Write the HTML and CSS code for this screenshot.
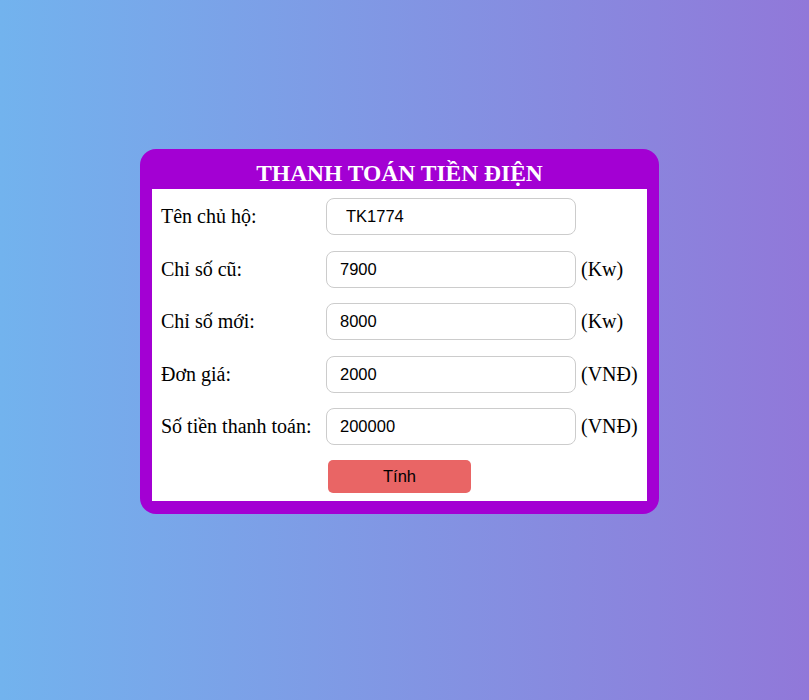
FILE: index.html
```html
<!DOCTYPE html>
<html>
<head>
<meta charset="utf-8">
<link rel="stylesheet" href="styles.css">
</head>
<body>
<div class="page">
  <form class="card">
    <h1 class="title">THANH TOÁN TIỀN ĐIỆN</h1>
    <div class="panel">
      <div class="row">
        <label class="label">Tên chủ hộ:</label>
        <input class="field field-name" value="TK1774">
        <span class="unit"></span>
      </div>
      <div class="row">
        <label class="label">Chỉ số cũ:</label>
        <input class="field" value="7900">
        <span class="unit">(Kw)</span>
      </div>
      <div class="row">
        <label class="label">Chỉ số mới:</label>
        <input class="field" value="8000">
        <span class="unit">(Kw)</span>
      </div>
      <div class="row">
        <label class="label">Đơn giá:</label>
        <input class="field" value="2000">
        <span class="unit">(VNĐ)</span>
      </div>
      <div class="row">
        <label class="label">Số tiền thanh toán:</label>
        <input class="field" value="200000">
        <span class="unit">(VNĐ)</span>
      </div>
      <div class="actions">
        <button type="button" class="btn">Tính</button>
      </div>
    </div>
  </form>
</div>
</body>
</html>
```
FILE: styles.css
```css
html, body {
  margin: 0;
  padding: 0;
  height: 100%;
}
body {
  background: linear-gradient(to right, #72b3ee, #9178d9);
  font-family: "Liberation Serif", "Times New Roman", serif;
}
.page {
  height: 700px;
  display: flex;
  justify-content: flex-start;
  align-items: flex-start;
  padding: 149px 0 0 140px;
  box-sizing: border-box;
}
.card {
  width: 519px;
  box-sizing: border-box;
  background: #a300d3;
  border-radius: 16px;
  padding: 0 12px 13px 12px;
  margin: 0;
}
.title {
  margin: 0;
  height: 40px;
  box-sizing: border-box;
  padding-top: 11px;
  text-align: center;
  color: #fff;
  font-size: 23.5px;
  line-height: 27px;
  font-weight: bold;
}
.panel {
  background: #fff;
  padding: 9px 0 8px 9px;
}
.row {
  display: flex;
  align-items: center;
  height: 37px;
  margin-bottom: 15.5px;
}
.label {
  width: 165px;
  flex: none;
  font-size: 20px;
  color: #000;
}
.field {
  width: 250px;
  height: 37px;
  box-sizing: border-box;
  border: 1px solid #cccccc;
  border-radius: 8px;
  padding: 0 13px;
  font-family: "Liberation Sans", Arial, sans-serif;
  font-size: 16.5px;
  color: #000;
  background: #fff;
  outline: none;
  flex: none;
}
.field-name {
  padding-left: 19px;
}
.unit {
  margin-left: 5px;
  font-size: 20px;
  color: #000;
}
.actions {
  display: flex;
  padding-left: 167px;
  margin-top: -0.5px;
}
.btn {
  width: 143px;
  height: 33px;
  border: none;
  border-radius: 5px;
  background: #e96565;
  color: #000;
  font-family: "Liberation Sans", Arial, sans-serif;
  font-size: 16.5px;
  padding: 0;
}
```
